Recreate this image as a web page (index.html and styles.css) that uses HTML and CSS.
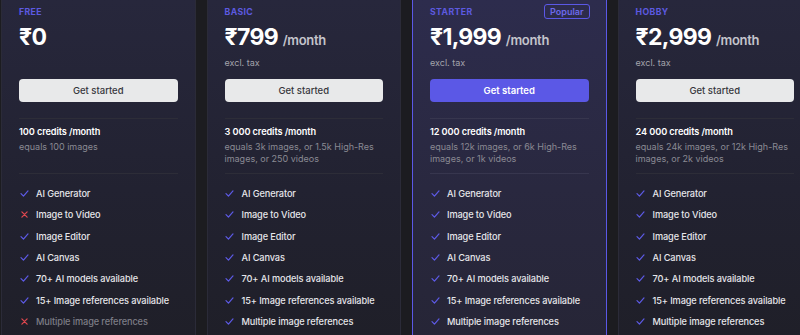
FILE: index.html
```html
<!DOCTYPE html>
<html lang="en">
<head>
<meta charset="UTF-8" />
<title>Pricing</title>
<link rel="stylesheet" href="styles.css">
</head>
<body>
<div class="plans">
  <!-- Free -->
  <div class="plan">
    <div class="plan-head">
      <div class="plan-label">Free</div>
      <div class="plan-price">₹0</div>
    </div>
    <button class="plan-btn">Get started</button>
    <div class="plan-credits">
      <div class="credits-title">100 credits /month</div>
      <div class="credits-sub">equals 100 images</div>
    </div>
    <ul class="features">
      <li><span class="ico check"><svg viewBox="0 0 10 8"><path d="M1 4.2 L3.8 7 L9 1"/></svg></span>AI Generator</li>
      <li><span class="ico cross"><svg viewBox="0 0 8 8"><path d="M1 1 L7 7 M7 1 L1 7"/></svg></span>Image to Video</li>
      <li><span class="ico check"><svg viewBox="0 0 10 8"><path d="M1 4.2 L3.8 7 L9 1"/></svg></span>Image Editor</li>
      <li><span class="ico check"><svg viewBox="0 0 10 8"><path d="M1 4.2 L3.8 7 L9 1"/></svg></span>AI Canvas</li>
      <li><span class="ico check"><svg viewBox="0 0 10 8"><path d="M1 4.2 L3.8 7 L9 1"/></svg></span>70+ AI models available</li>
      <li><span class="ico check"><svg viewBox="0 0 10 8"><path d="M1 4.2 L3.8 7 L9 1"/></svg></span>15+ Image references available</li>
      <li class="off"><span class="ico cross"><svg viewBox="0 0 8 8"><path d="M1 1 L7 7 M7 1 L1 7"/></svg></span>Multiple image references</li>
    </ul>
  </div>
  <!-- Basic -->
  <div class="plan">
    <div class="plan-head">
      <div class="plan-label">Basic</div>
      <div class="plan-price">₹799 <span class="per">/month</span></div>
      <div class="plan-tax">excl. tax</div>
    </div>
    <button class="plan-btn">Get started</button>
    <div class="plan-credits">
      <div class="credits-title">3 000 credits /month</div>
      <div class="credits-sub">equals 3k images, or 1.5k High-Res images, or 250 videos</div>
    </div>
    <ul class="features">
      <li><span class="ico check"><svg viewBox="0 0 10 8"><path d="M1 4.2 L3.8 7 L9 1"/></svg></span>AI Generator</li>
      <li><span class="ico check"><svg viewBox="0 0 10 8"><path d="M1 4.2 L3.8 7 L9 1"/></svg></span>Image to Video</li>
      <li><span class="ico check"><svg viewBox="0 0 10 8"><path d="M1 4.2 L3.8 7 L9 1"/></svg></span>Image Editor</li>
      <li><span class="ico check"><svg viewBox="0 0 10 8"><path d="M1 4.2 L3.8 7 L9 1"/></svg></span>AI Canvas</li>
      <li><span class="ico check"><svg viewBox="0 0 10 8"><path d="M1 4.2 L3.8 7 L9 1"/></svg></span>70+ AI models available</li>
      <li><span class="ico check"><svg viewBox="0 0 10 8"><path d="M1 4.2 L3.8 7 L9 1"/></svg></span>15+ Image references available</li>
      <li><span class="ico check"><svg viewBox="0 0 10 8"><path d="M1 4.2 L3.8 7 L9 1"/></svg></span>Multiple image references</li>
    </ul>
  </div>
  <!-- Starter -->
  <div class="plan popular">
    <span class="badge">Popular</span>
    <div class="plan-head">
      <div class="plan-label">Starter</div>
      <div class="plan-price">₹1,999 <span class="per">/month</span></div>
      <div class="plan-tax">excl. tax</div>
    </div>
    <button class="plan-btn primary">Get started</button>
    <div class="plan-credits">
      <div class="credits-title">12 000 credits /month</div>
      <div class="credits-sub">equals 12k images, or 6k High-Res images, or 1k videos</div>
    </div>
    <ul class="features">
      <li><span class="ico check"><svg viewBox="0 0 10 8"><path d="M1 4.2 L3.8 7 L9 1"/></svg></span>AI Generator</li>
      <li><span class="ico check"><svg viewBox="0 0 10 8"><path d="M1 4.2 L3.8 7 L9 1"/></svg></span>Image to Video</li>
      <li><span class="ico check"><svg viewBox="0 0 10 8"><path d="M1 4.2 L3.8 7 L9 1"/></svg></span>Image Editor</li>
      <li><span class="ico check"><svg viewBox="0 0 10 8"><path d="M1 4.2 L3.8 7 L9 1"/></svg></span>AI Canvas</li>
      <li><span class="ico check"><svg viewBox="0 0 10 8"><path d="M1 4.2 L3.8 7 L9 1"/></svg></span>70+ AI models available</li>
      <li><span class="ico check"><svg viewBox="0 0 10 8"><path d="M1 4.2 L3.8 7 L9 1"/></svg></span>15+ Image references available</li>
      <li><span class="ico check"><svg viewBox="0 0 10 8"><path d="M1 4.2 L3.8 7 L9 1"/></svg></span>Multiple image references</li>
    </ul>
  </div>
  <!-- Hobby -->
  <div class="plan">
    <div class="plan-head">
      <div class="plan-label">Hobby</div>
      <div class="plan-price">₹2,999 <span class="per">/month</span></div>
      <div class="plan-tax">excl. tax</div>
    </div>
    <button class="plan-btn">Get started</button>
    <div class="plan-credits">
      <div class="credits-title">24 000 credits /month</div>
      <div class="credits-sub">equals 24k images, or 12k High-Res images, or 2k videos</div>
    </div>
    <ul class="features">
      <li><span class="ico check"><svg viewBox="0 0 10 8"><path d="M1 4.2 L3.8 7 L9 1"/></svg></span>AI Generator</li>
      <li><span class="ico check"><svg viewBox="0 0 10 8"><path d="M1 4.2 L3.8 7 L9 1"/></svg></span>Image to Video</li>
      <li><span class="ico check"><svg viewBox="0 0 10 8"><path d="M1 4.2 L3.8 7 L9 1"/></svg></span>Image Editor</li>
      <li><span class="ico check"><svg viewBox="0 0 10 8"><path d="M1 4.2 L3.8 7 L9 1"/></svg></span>AI Canvas</li>
      <li><span class="ico check"><svg viewBox="0 0 10 8"><path d="M1 4.2 L3.8 7 L9 1"/></svg></span>70+ AI models available</li>
      <li><span class="ico check"><svg viewBox="0 0 10 8"><path d="M1 4.2 L3.8 7 L9 1"/></svg></span>15+ Image references available</li>
      <li><span class="ico check"><svg viewBox="0 0 10 8"><path d="M1 4.2 L3.8 7 L9 1"/></svg></span>Multiple image references</li>
    </ul>
  </div>
</div>
</body>
</html>
```

FILE: styles.css
```css
:root {
  --page-bg: #1c1c20;
  --card-border: #2b2b38;
  --accent: #5b58e6;
  --accent-text: #5d5ae0;
  --text: #f4f4f6;
  --muted: #a3a3ab;
  --dim: #8a8a93;
}
* { box-sizing: border-box; }
html, body {
  margin: 0;
  height: 335px;
  overflow: hidden;
}
body {
  background: var(--page-bg);
  font-family: Inter, "Liberation Sans", sans-serif;
  color: var(--text);
}
.plans {
  display: flex;
  gap: 11px;
  padding-left: 1px;
}
.plan {
  flex: 0 0 194.5px;
  position: relative;
  height: 345px;
  padding: 5px 17px 0;
  background: linear-gradient(180deg, #27273c 0%, #222231 55%, #1f1f28 100%);
  border: 1px solid var(--card-border);
  border-top: none;
}
.plan.popular {
  background: linear-gradient(180deg, #2d2c4d 0%, #29283f 55%, #262536 100%);
  border-color: var(--accent);
}
.badge {
  position: absolute;
  top: 4px;
  right: 16px;
  padding: 0 5px;
  height: 15px;
  line-height: 13px;
  font-size: 9px;
  font-weight: 600;
  color: #6c69ea;
  border: 1px solid var(--accent);
  border-radius: 3px;
}
.plan-head {
  height: 62px;
}
.plan-label {
  height: 14px;
  line-height: 14px;
  font-size: 8.7px;
  font-weight: 700;
  letter-spacing: .4px;
  text-transform: uppercase;
  color: var(--accent-text);
}
.plan-price {
  margin-top: 3px;
  line-height: 30px;
  font-size: 23px;
  font-weight: 700;
  letter-spacing: -.7px;
  color: #fff;
  white-space: nowrap;
}
.plan-price .per {
  font-size: 13px;
  font-weight: 600;
  letter-spacing: -.3px;
  color: #c4c4cc;
}
.plan-tax {
  margin-top: 1px;
  line-height: 14px;
  font-size: 9px;
  color: var(--muted);
}
.plan-btn {
  display: block;
  width: 100%;
  height: 23px;
  margin-top: 12px;
  border: none;
  border-radius: 4px;
  background: #e8e9ea;
  color: #35353a;
  font-family: inherit;
  font-size: 9.5px;
  font-weight: 500;
}
.plan-btn.primary {
  background: var(--accent);
  color: #fff;
  font-weight: 600;
}
.plan-credits {
  height: 55px;
  margin-top: 16px;
  padding-top: 6px;
  border-top: 1px solid #2d2d38;
}
.popular .plan-credits,
.popular .features { border-top-color: #37364e; }
.credits-title {
  line-height: 14px;
  font-size: 9.2px;
  font-weight: 600;
  letter-spacing: -.1px;
  color: #fff;
}
.credits-sub {
  margin-top: 2px;
  line-height: 12px;
  font-size: 9px;
  color: var(--dim);
}
.features {
  list-style: none;
  margin: 0;
  padding: 9px 0 0;
  border-top: 1px solid #2d2d38;
}
.features li {
  display: flex;
  align-items: center;
  gap: 7px;
  height: 21.3px;
  font-size: 9.2px;
  font-weight: 500;
  letter-spacing: -.1px;
  color: #e6e6ea;
  white-space: nowrap;
}
.features li.off { color: #7d7d86; }
.ico {
  display: flex;
  width: 10px;
  justify-content: center;
}
.ico svg {
  fill: none;
  stroke-width: 1.4;
  stroke-linecap: round;
  stroke-linejoin: round;
}
.check svg {
  width: 9px;
  height: 7px;
  stroke: #5d5ae6;
}
.cross svg {
  width: 7px;
  height: 7px;
  stroke: #e0474f;
}
```
